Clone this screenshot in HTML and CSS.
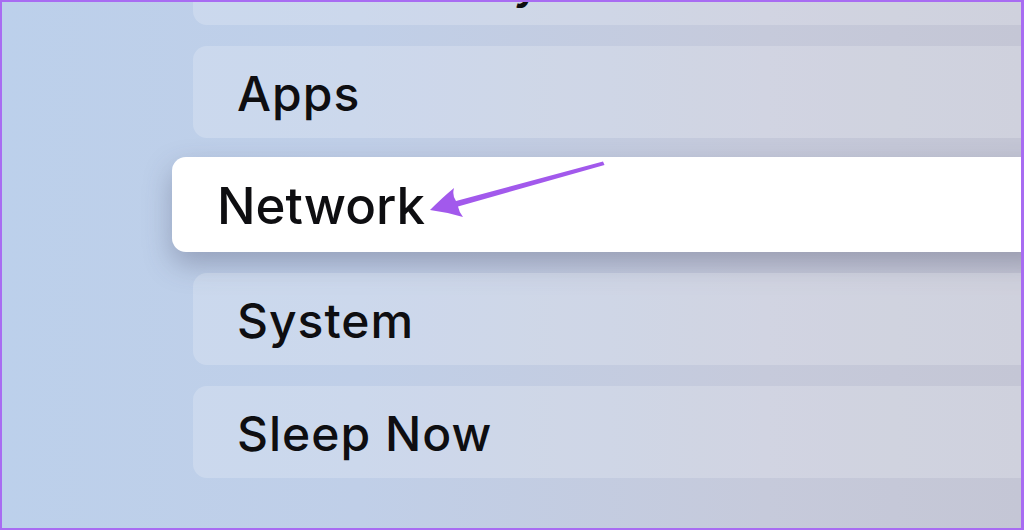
FILE: index.html
```html
<!DOCTYPE html>
<html lang="en">
<head>
<meta charset="utf-8">
<title>Settings</title>
<link rel="stylesheet" href="styles.css">
</head>
<body>
<div class="screen">
  <ul class="menu">
    <li class="item">Accessibility</li>
    <li class="item">Apps</li>
    <li class="item item--focused">Network</li>
    <li class="item">System</li>
    <li class="item">Sleep Now</li>
  </ul>
  <svg class="pointer" width="1024" height="530" viewBox="0 0 1024 530" aria-hidden="true">
    <path d="M430 210 Q443 197 454 188 Q452 196 456 201 L603 161.5 L604.5 165 L458 206.5 Q459 212 463 217 Q446 212 430 210 Z" fill="#a259ec"/>
  </svg>
</div>
</body>
</html>
```

FILE: styles.css
```css
html, body {
  margin: 0;
  padding: 0;
}

body {
  width: 1024px;
  height: 530px;
  overflow: hidden;
}

.screen {
  position: relative;
  box-sizing: border-box;
  width: 1024px;
  height: 530px;
  border: 2px solid #a86cf2;
  border-right-width: 3px;
  overflow: hidden;
  background:
    linear-gradient(90deg, #bcd0eb 0%, #c0cfe8 35%, #c6cadb 75%, #c4c6d5 100%);
}

.menu {
  list-style: none;
  margin: -69px -30px 0 0;
  padding: 0 0 0 191px;
  display: flex;
  flex-direction: column;
  gap: 21px;
}

.item {
  box-sizing: border-box;
  height: 92px;
  display: flex;
  align-items: center;
  padding-left: 44px;
  padding-top: 2px;
  border-radius: 14px;
  background: rgba(255, 255, 255, 0.2);
  font-family: Inter, "Noto Sans", sans-serif;
  font-size: 48px;
  font-weight: 500;
  letter-spacing: 1px;
  color: #0e0e11;
}

.item--focused {
  height: 95px;
  margin: -2px 0 0 -21px;
  padding-left: 45px;
  background: #ffffff;
  font-size: 51px;
  letter-spacing: 0;
  box-shadow: 0 12px 28px rgba(70, 72, 100, 0.35);
}

.pointer {
  position: absolute;
  left: -2px;
  top: -2px;
  pointer-events: none;
}
```
